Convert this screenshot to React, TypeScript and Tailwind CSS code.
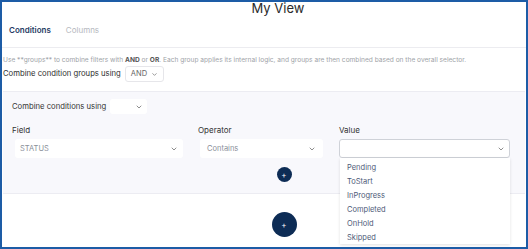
import { ChevronDown } from "lucide-react";

const statuses = ["Pending", "ToStart", "InProgress", "Completed", "OnHold", "Skipped"];

function Select({ value, className }: { value?: string; className: string }) {
  return (
    <div className={`flex items-center justify-between bg-white rounded-[3px] ${className}`}>
      <span className="text-[7.5px] text-[#8a8f99]">{value}</span>
      <ChevronDown className="w-[8px] h-[8px] text-[#555]" strokeWidth={2} />
    </div>
  );
}

function PlusButton({ size }: { size: "sm" | "lg" }) {
  return (
    <button
      className={`flex items-center justify-center rounded-full bg-[#0d2c55] text-white ${
        size === "sm" ? "w-[15px] h-[15px] text-[8px]" : "w-[25px] h-[25px] text-[8px]"
      }`}
    >
      +
    </button>
  );
}

export default function App() {
  return (
    <div
      className="relative w-[528px] h-[249px] overflow-hidden border-2 border-[#1d5ca6] bg-white flex flex-col"
      style={{ fontFamily: "Inter, 'Open Sans', sans-serif" }}
    >
      {/* Title */}
      <div className="h-[14px] flex justify-center pl-[28px] text-[13px] leading-[14px] text-[#2a2a2a] -mt-[1px]">
        My View
      </div>

      {/* Tabs */}
      <div className="h-[33px] flex items-center gap-[15px] pl-[7px] pb-[3px] text-[8px] border-b border-[#ececf0]">
        <span className="font-semibold text-[#1f3b63]">Conditions</span>
        <span className="text-[#b5b8be]">Columns</span>
      </div>

      {/* Helper + group selector */}
      <div className="pl-[1px] pt-[8px]">
        <p className="text-[6.6px] leading-[8px] text-[#a0a3a8] whitespace-nowrap">
          Use **groups** to combine filters with <b className="text-[#555]">AND</b> or{" "}
          <b className="text-[#555]">OR</b>. Each group applies its internal logic, and groups are then combined
          based on the overall selector.
        </p>
        <div className="flex items-center gap-[4px] mt-[2px]">
          <span className="text-[7.7px] text-[#2e2e2e]">Combine condition groups using</span>
          <div className="flex items-center gap-[4px] h-[16px] px-[5px] border border-[#e6e6ea] rounded-[3px] text-[7.5px] text-[#666]">
            AND
            <ChevronDown className="w-[7px] h-[7px] text-[#555]" strokeWidth={2} />
          </div>
        </div>
      </div>

      {/* Condition group panel */}
      <div className="mt-[9px] mx-[1px] h-[103px] bg-[#f8f8fc] border-t border-b border-[#ececf2] pl-[9px] pt-[7px]">
        <div className="flex items-center gap-[4px]">
          <span className="text-[7.7px] text-[#333]">Combine conditions using</span>
          <Select className="w-[37px] h-[15px] px-[4px] bg-[#f2f2f6]" />
        </div>

        <div className="flex mt-[10px] text-[8px] text-[#333]">
          <div className="w-[186px]">
            <div className="h-[12px]">Field</div>
            <Select value="STATUS" className="ml-[3px] mt-[3px] w-[168px] h-[19px] px-[5px]" />
          </div>
          <div className="w-[141px]">
            <div className="h-[12px]">Operator</div>
            <Select value="Contains" className="ml-[2px] mt-[3px] w-[123px] h-[19px] px-[7px]" />
            <div className="flex justify-center mt-[9px] pl-[31px]">
              <PlusButton size="sm" />
            </div>
          </div>
          <div className="relative w-[171px]">
            <div className="h-[12px]">Value</div>
            <Select className="mt-[3px] w-[171px] h-[19px] px-[4px] border border-[#cfd2d8]" />
          </div>
        </div>
      </div>

      <div className="flex justify-center pl-[40px] mt-[18px]">
        <PlusButton size="lg" />
      </div>

      {/* Value dropdown */}
      <div className="absolute left-[338px] top-[156px] w-[170px] h-[86px] bg-white shadow-[0_1px_3px_rgba(0,0,0,0.12)] pt-[3px] pl-[7px]">
        {statuses.map((s) => (
          <div key={s} className="h-[14px] leading-[14px] text-[7.5px] text-[#4e5a78]">
            {s}
          </div>
        ))}
      </div>
    </div>
  );
}
